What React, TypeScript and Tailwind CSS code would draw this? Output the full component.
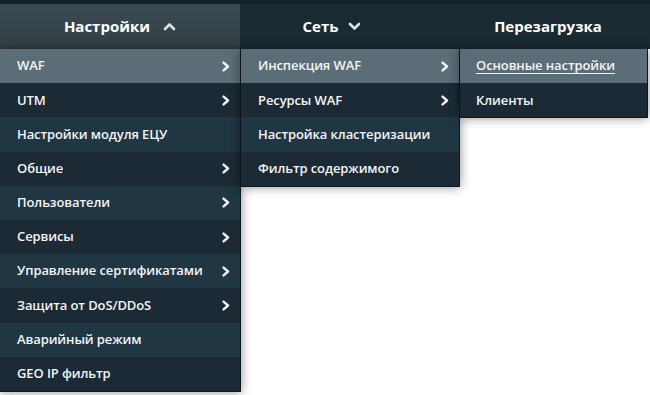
import React from "react";

const Chev = () => (
  <svg width="8" height="11" viewBox="0 0 8 11">
    <path d="M1.6 1.6 L6 5.5 L1.6 9.4" fill="none" stroke="#f2f2f2" strokeWidth="2.4" strokeLinecap="round" strokeLinejoin="round" />
  </svg>
);

const ChevUp = () => (
  <svg width="13" height="9" viewBox="0 0 13 9">
    <path d="M2 7 L6.5 2.5 L11 7" fill="none" stroke="#dfe3e5" strokeWidth="2.6" strokeLinecap="round" strokeLinejoin="round" />
  </svg>
);

const ChevDown = () => (
  <svg width="13" height="9" viewBox="0 0 13 9">
    <path d="M2 2 L6.5 6.5 L11 2" fill="none" stroke="#dfe3e5" strokeWidth="2.6" strokeLinecap="round" strokeLinejoin="round" />
  </svg>
);

type Item = { label: string; arrow?: boolean; active?: boolean; underline?: boolean };

const col1: Item[] = [
  { label: "WAF", arrow: true, active: true },
  { label: "UTM", arrow: true },
  { label: "Настройки модуля ЕЦУ" },
  { label: "Общие", arrow: true },
  { label: "Пользователи", arrow: true },
  { label: "Сервисы", arrow: true },
  { label: "Управление сертификатами", arrow: true },
  { label: "Защита от DoS/DDoS", arrow: true },
  { label: "Аварийный режим" },
  { label: "GEO IP фильтр" },
];

const col2: Item[] = [
  { label: "Инспекция WAF", arrow: true, active: true },
  { label: "Ресурсы WAF", arrow: true },
  { label: "Настройка кластеризации" },
  { label: "Фильтр содержимого" },
];

const col3: Item[] = [
  { label: "Основные настройки", active: true, underline: true },
  { label: "Клиенты" },
];

function Menu({ items, width, z, pl }: { items: Item[]; width: string; z: string; pl: string }) {
  return (
    <div className={`relative shrink-0 ${z} ${width} border-r border-b border-[#0c1720] shadow-[0_0_10px_rgba(0,0,0,0.45)]`}>
      {items.map((it, i) => {
        const bg = it.active ? "bg-[#5b6d77]" : i % 2 === 1 ? "bg-[#1b2a34]" : "bg-[#213643]";
        return (
          <div key={it.label} className={`flex h-[34.2px] items-center justify-between ${pl} pr-[10px] ${bg}`}>
            <span className={`text-[13px] tracking-[-0.1px] font-semibold text-[#f3f5f6] ${it.underline ? "underline underline-offset-[3px]" : ""}`}>
              {it.label}
            </span>
            {it.arrow && <Chev />}
          </div>
        );
      })}
    </div>
  );
}

export default function App() {
  return (
    <div
      className="relative h-[395px] w-[650px] overflow-hidden bg-white"
      style={{ fontFamily: '"Open Sans", "Noto Sans", sans-serif' }}
    >
      <div className="h-[4px] bg-[#15222b]" />
      <div className="flex h-[45px] bg-[#1a2a33] text-[15px] font-bold text-white">
        <div className="flex w-[240px] shrink-0 items-center justify-center gap-[13px] bg-gradient-to-b from-[#3b4a52] to-[#323f46]">
          <span>Настройки</span>
          <ChevUp />
        </div>
        <div className="flex w-[184px] shrink-0 items-center justify-center gap-[10px]">
          <span>Сеть</span>
          <ChevDown />
        </div>
        <div className="flex w-[248px] shrink-0 items-center justify-center">
          <span>Перезагрузка</span>
        </div>
      </div>
      <div className="flex items-start">
        <Menu items={col1} width="w-[241px]" z="z-10" pl="pl-[17px]" />
        <Menu items={col2} width="w-[219px]" z="z-20" pl="pl-[17px]" />
        <Menu items={col3} width="w-[188px]" z="z-30" pl="pl-[16px]" />
      </div>
    </div>
  );
}
